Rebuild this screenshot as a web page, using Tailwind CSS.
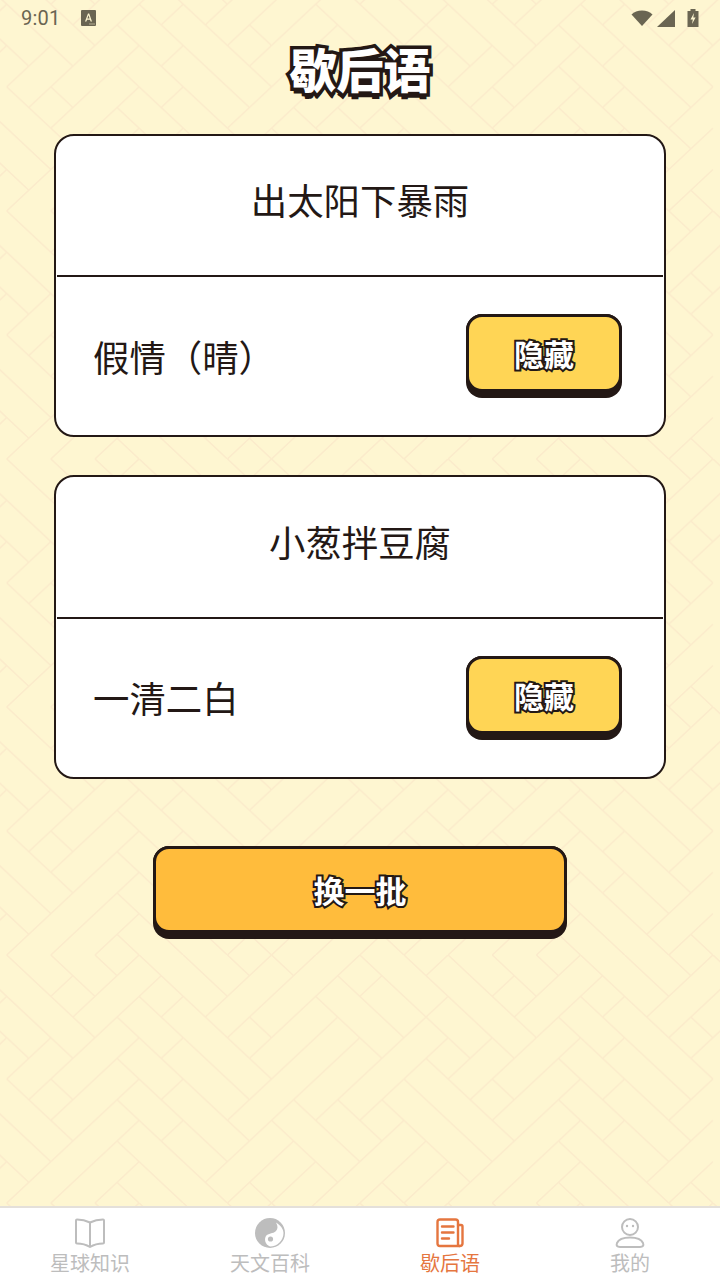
<!DOCTYPE html>
<html lang="zh">
<head>
    <meta charset="UTF-8">
    <meta name="viewport" content="width=device-width, initial-scale=1.0">
    <title>歇后语</title>
    <script src="https://cdn.jsdelivr.net/npm/@tailwindcss/browser@4"></script>
</head>
<body class="bg-[#fef6d1]">
    <div class="relative w-[720px] h-[1280px] overflow-hidden flex flex-col bg-[#fef6d1] text-[#231815] font-['Noto_Sans_CJK_SC','Noto_Sans',sans-serif]">

        <!-- herringbone background -->
        <svg class="absolute inset-0 w-[720px] h-[1280px]" width="720" height="1280">
            <defs>
                <pattern id="bricks" patternUnits="userSpaceOnUse" width="720" height="248.04" patternTransform="translate(0 -37.16)">
                    <g transform="translate(6.7 0) scale(22.07 20.67)" fill="none" stroke="#fbebcb" stroke-width="1.6">
                        <path vector-effect="non-scaling-stroke" d="M0 0L4 4M2 0L4 2M4 0L5 1M6 0L12 6M8 0L10 2M10 0L11 1M12 0L13 1M16 0L21 5M15 1L18 4M14 2L17 5M11 3L12 4M-1 1L3 5M-1 3L1 5M0 6L3 9M-1 7L2 10M-1 9L1 11M2 6L3 7M5 3L11 9M6 2L11 7M5 5L10 10M5 7L10 12M5 9L8 12M5 11L6 12M11 11L12 12M12 8L15 11M13 7L16 10M15 7L17 9M17 7L21 11M18 6L22 10M19 5L23 9M17 11L18 12M18 0L23 5M20 0L24 4M22 0L24 2M24 0L25 1M26 0L32 6M28 0L30 2M30 0L31 1M32 0L33 1M25 3L31 9M26 2L31 7M25 5L30 10M25 7L30 12M25 9L28 12M25 11L26 12M31 11L32 12M22 6L23 7M31 3L32 4"/>
                        <path vector-effect="non-scaling-stroke" d="M2 2L3 1M3 3L6 0M1 7L7 1M2 8L6 4M7 3L8 2M7 5L8 4M7 7L8 6M7 9L8 8M0 6L2 4M0 12L6 6M2 12L6 8M4 12L6 10M-1 11L0 10M-1 5L0 4M-1 3L0 2M9 3L12 0M10 2L11 1M10 4L14 0M11 5L16 0M10 8L15 3M9 11L16 4M10 12L13 9M12 12L14 10M14 12L18 8M16 2L17 1M14 8L20 2M16 8L20 4M16 12L19 9M18 12L20 10M20 6L22 4M21 7L27 1M23 3L26 0M22 8L26 4M22 10L26 6M20 12L26 6M22 12L26 8M24 12L26 10M22 2L23 1M19 1L20 0M27 3L28 2M27 5L28 4M27 7L28 6M27 9L28 8M29 3L32 0M30 4L33 1M31 5L33 3M30 8L32 6M29 11L32 8M30 12L32 10"/>
                    </g>
                </pattern>
            </defs>
            <rect width="720" height="1280" fill="url(#bricks)"/>
        </svg>

        <!-- status bar -->
        <div class="relative h-[36px] shrink-0 flex items-center pl-[21px] pr-[21px] text-[#6a6552]">
            <span class="font-['Roboto',sans-serif] text-[20px] leading-none tracking-[0.2px]">9:01</span>
            <svg class="ml-[21px]" width="15" height="16" viewBox="0 0 15 16">
                <rect width="15" height="16" rx="1" fill="#6a6552"/>
                <path d="M4 11.5L7 3.5H8.2L11 11.5H9.6L9 9.7H6L5.4 11.5ZM6.4 8.5H8.6L7.5 5.3Z" fill="#fef6d1"/>
                <path d="M8.5 13.5h1v1h-1zM10.5 13.5h1v1h-1zM12.5 13.5h1v1h-1z" fill="#fef6d1"/>
            </svg>
            <div class="ml-auto flex items-center">
                <svg width="22" height="16" viewBox="0 0 22 16"><path d="M0.5 4.5C3 2 6.8 0.5 11 0.5S19 2 21.5 4.5L11 16Z" fill="#6a6552"/></svg>
                <svg class="ml-[4px]" width="18" height="17" viewBox="0 0 18 17"><path d="M18 0V17H0Z" fill="#6a6552"/></svg>
                <svg class="ml-[12px]" width="12" height="18" viewBox="0 0 12 18">
                    <path d="M3.5 0H8.500V2H11.500V18H0.500V2H3.500Z" fill="#6a6552"/>
                    <path d="M7 4L3.500 10.500H5.800L5 15L8.600 8.500H6.300Z" fill="#fef6d1"/>
                </svg>
            </div>
        </div>

        <!-- title -->
        <h1 class="relative h-[62px] mb-[36px] shrink-0 flex items-center justify-center text-[47px] leading-none font-black text-white [-webkit-text-stroke:7px_#231815] [paint-order:stroke_fill] [text-shadow:0_6px_0_#231815]">歇后语</h1>

        <!-- cards -->
        <div class="relative px-[54px] flex flex-col gap-[38px]">
            <div class="h-[303px] bg-white border-2 border-[#231815] rounded-[20px] flex flex-col">
                <div class="h-[139px] pb-[12px] flex items-center justify-center text-[36.4px] leading-none">出太阳下暴雨</div>
                <div class="h-[2px] mx-[1px] bg-[#231815]"></div>
                <div class="flex-1 flex items-center justify-between pl-[37px] pr-[42px]">
                    <span class="text-[36.4px] leading-none">假情（晴）</span>
                    <button class="w-[156px] h-[84px] pb-[6px] rounded-[16px] bg-[#231815]">
                        <span class="h-[78px] flex items-center justify-center rounded-[16px] border-[3px] border-[#231815] bg-[#ffd555] text-[30px] leading-none font-bold text-white [-webkit-text-stroke:4px_#231815] [paint-order:stroke_fill]">隐藏</span>
                    </button>
                </div>
            </div>

            <div class="h-[304px] bg-white border-2 border-[#231815] rounded-[20px] flex flex-col">
                <div class="h-[140px] pb-[12px] flex items-center justify-center text-[36.4px] leading-none">小葱拌豆腐</div>
                <div class="h-[2px] mx-[1px] bg-[#231815]"></div>
                <div class="flex-1 flex items-center justify-between pl-[37px] pr-[42px]">
                    <span class="text-[36.4px] leading-none -mt-[2px]">一清二白</span>
                    <button class="w-[156px] h-[84px] pb-[6px] rounded-[16px] bg-[#231815]">
                        <span class="h-[78px] flex items-center justify-center rounded-[16px] border-[3px] border-[#231815] bg-[#ffd555] text-[30px] leading-none font-bold text-white [-webkit-text-stroke:4px_#231815] [paint-order:stroke_fill]">隐藏</span>
                    </button>
                </div>
            </div>
        </div>

        <!-- refresh -->
        <div class="relative mt-[67px] flex justify-center">
            <button class="w-[414px] h-[93px] pb-[6px] rounded-[16px] bg-[#231815]">
                <span class="h-[87px] flex items-center justify-center rounded-[16px] border-[3px] border-[#231815] bg-[#ffbc3c] text-[31px] leading-none font-bold text-white [-webkit-text-stroke:4px_#231815] [paint-order:stroke_fill]">换一批</span>
            </button>
        </div>

        <!-- bottom nav -->
        <div class="relative mt-auto h-[74px] bg-white border-t-2 border-[#e4e0da] grid grid-cols-4 text-[20px] leading-none text-[#bdbdbd]">
            <div class="flex flex-col items-center pt-[10px]">
                <svg width="30" height="30" viewBox="0 0 30 30" fill="none" stroke="#bdbdbd" stroke-width="2" stroke-linejoin="round">
                    <path d="M15 4.500C11 2.500 6 1.500 2 1.500C1.300 1.500 1 2 1 2.500V24.500C1 25 1.300 25.500 2 25.500C6 25.500 11 26.500 15 29C19 26.500 24 25.500 28 25.500C28.700 25.500 29 25 29 24.500V2.500C29 2 28.700 1.500 28 1.500C24 1.500 19 2.500 15 4.500Z"/>
                    <path d="M15 4.500V29"/>
                </svg>
                <span class="mt-[5px]">星球知识</span>
            </div>
            <div class="flex flex-col items-center pt-[10px]">
                <svg width="30" height="30" viewBox="0 0 30 30">
                    <circle cx="15" cy="15" r="15" fill="#bdbdbd"/>
                    <path d="M15 28.500C10 26.500 9 21 11 18C13 15 18 16 21 13C23 11 23 8 21 4.500C26 7.500 28.500 11.500 28.500 15C28.500 22.500 22.500 28.500 15 28.500Z" fill="#fff"/>
                    <circle cx="15.500" cy="21" r="2.600" fill="#bdbdbd"/>
                </svg>
                <span class="mt-[5px]">天文百科</span>
            </div>
            <div class="flex flex-col items-center pt-[10px] text-[#e5763f]">
                <svg width="28" height="30" viewBox="0 0 28 30" fill="none" stroke="#e5763f" stroke-width="2.400" stroke-linecap="round" stroke-linejoin="round">
                    <path d="M22 4V26.500C22 27.500 22.500 28 23.500 28H4C2.500 28 1.500 27 1.500 25.500V4C1.500 2.500 2.500 1.500 4 1.500H19.500C21 1.500 22 2.500 22 4Z"/>
                    <path d="M22 7H25C26 7 26.500 7.500 26.500 8.500V25.500C26.500 27 25.500 28 23.500 28"/>
                    <path d="M6 8.500H17.500M6 14.500H17.500M6 20.500H13"/>
                </svg>
                <span class="mt-[5px]">歇后语</span>
            </div>
            <div class="flex flex-col items-center pt-[10px]">
                <svg width="30" height="30" viewBox="0 0 30 30" fill="none" stroke="#bdbdbd" stroke-width="2">
                    <circle cx="15" cy="9" r="8"/>
                    <circle cx="12" cy="8" r="1.200" fill="#bdbdbd" stroke="none"/>
                    <circle cx="18" cy="8" r="1.200" fill="#bdbdbd" stroke="none"/>
                    <path d="M5 29C2 29 1 27.500 2 25C3.500 21.500 8 19.500 15 19.500S26.500 21.500 28 25C29 27.500 28 29 25 29Z"/>
                </svg>
                <span class="mt-[5px]">我的</span>
            </div>
        </div>
    </div>
</body>
</html>
